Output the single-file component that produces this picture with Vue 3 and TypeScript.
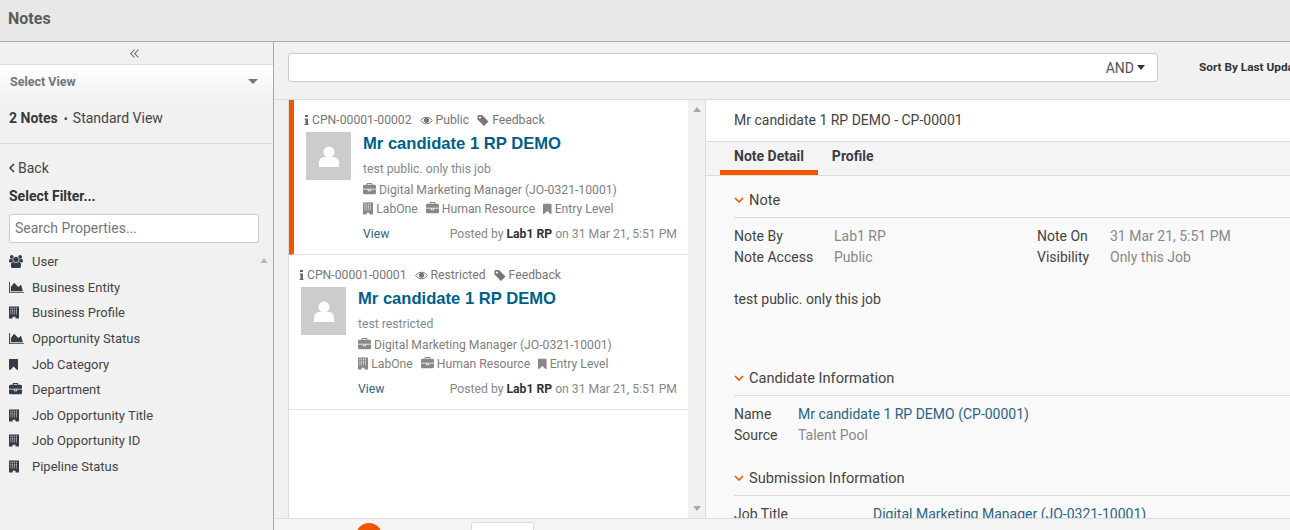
<script setup lang="ts">
// 筛选项图标类型
type IconName = "users" | "chart" | "building" | "bookmark" | "briefcase";

const filters: { label: string; icon: IconName }[] = [
  { label: "User", icon: "users" },
  { label: "Business Entity", icon: "chart" },
  { label: "Business Profile", icon: "building" },
  { label: "Opportunity Status", icon: "chart" },
  { label: "Job Category", icon: "bookmark" },
  { label: "Department", icon: "briefcase" },
  { label: "Job Opportunity Title", icon: "building" },
  { label: "Job Opportunity ID", icon: "building" },
  { label: "Pipeline Status", icon: "building" },
];

const notes = [
  { id: "CPN-00001-00002", access: "Public", body: "test public. only this job", active: true },
  { id: "CPN-00001-00001", access: "Restricted", body: "test restricted", active: false },
];

const paths: Record<IconName, { box: string; d: string }> = {
  users: {
    box: "0 0 1920 1792",
    d: "M593 896q-162 5-265 128h-134q-82 0-138-40.500t-56-118.500q0-353 124-353 6 0 43.500 21t97.500 42.500 119 21.500q67 0 133-23-5 37-5 66 0 139 81 256zm1071 637q0 120-73 189.500t-194 69.500h-874q-121 0-194-69.500t-73-189.500q0-53 3.500-103.500t14-109 26.500-108.500 43-97.500 62-81 85.500-53.500 111.500-20q10 0 43 21.500t73 48 107 48 135 21.500 135-21.500 107-48 73-48 43-21.500q61 0 111.500 20t85.500 53.500 62 81 43 97.500 26.500 108.500 14 109 3.500 103.500zm-1024-1277q0 106-75 181t-181 75-181-75-75-181 75-181 181-75 181 75 75 181zm704 384q0 159-112.500 271.500t-271.500 112.500-271.500-112.500-112.500-271.500 112.500-271.500 271.500-112.500 271.500 112.500 112.500 271.500zm576 225q0 78-56 118.500t-138 40.500h-134q-103-123-265-128 81-117 81-256 0-29-5-66 66 23 133 23 59 0 119-21.500t97.500-42.500 43.500-21q124 0 124 353zm-128-609q0 106-75 181t-181 75-181-75-75-181 75-181 181-75 181 75 75 181z",
  },
  chart: {
    box: "0 0 2048 1792",
    d: "M2048 1536v128h-2048v-1536h128v1408h1920zm-384-1024l256 896h-1664v-576l448-576 576 576z",
  },
  building: {
    box: "0 0 1408 1792",
    d: "M0 64h1408v1664h-512v-256h-384v256h-512zM192 256v128h128v-128zM448 256v128h128v-128zM704 256v128h128v-128zM960 256v128h128v-128zM192 512v128h128v-128zM448 512v128h128v-128zM704 512v128h128v-128zM960 512v128h128v-128zM192 768v128h128v-128zM448 768v128h128v-128zM704 768v128h128v-128zM960 768v128h128v-128zM192 1024v128h128v-128zM448 1024v128h128v-128zM704 1024v128h128v-128zM960 1024v128h128v-128z",
  },
  bookmark: {
    box: "0 0 1280 1792",
    d: "M1164 128q23 0 44 9 33 13 52.500 41t19.500 62v1289q0 34-19.500 62t-52.500 41q-19 8-44 8-48 0-83-32l-441-424-441 424q-36 33-83 33-23 0-44-9-33-13-52.500-41t-19.500-62v-1289q0-34 19.500-62t52.500-41q21-9 44-9h1048z",
  },
  briefcase: {
    box: "0 0 1792 1792",
    d: "M640 256h512v-128h-512v128zm1152 640v480q0 66-47 113t-113 47h-1472q-66 0-113-47t-47-113v-480h672v160q0 26 19 45t45 19h320q26 0 45-19t19-45v-160h672zm-768 0v128h-256v-128h256zm768-480v384h-1792v-384q0-66 47-113t113-47h352v-160q0-40 28-68t68-28h576q40 0 68 28t28 68v160h352q66 0 113 47t47 113z",
  },
};
</script>

<template>
  <div class="page">
    <header class="top">Notes</header>
    <div class="body">
      <aside class="side">
        <div class="collapse">
          <svg width="9" height="9" viewBox="0 0 9 9" fill="none" stroke="#666" stroke-width="1.100"><path d="M4.500 .5 .8 4.500l3.700 4M8.500 .5 4.800 4.500l3.700 4" /></svg>
        </div>
        <div class="view">
          <div class="view-select">
            <span>Select View</span>
            <i class="caret"></i>
          </div>
          <div class="view-count"><b>2 Notes</b><em>•</em>Standard View</div>
        </div>
        <div class="filter">
          <div class="back">
            <svg width="6" height="10" viewBox="0 0 6 10" fill="none" stroke="#333" stroke-width="1.500"><path d="M5 1 1 5l4 4" /></svg>
            Back
          </div>
          <div class="filter-title">Select Filter...</div>
          <input class="filter-input" placeholder="Search Properties..." />
          <ul class="filter-list">
            <li v-for="f in filters" :key="f.label">
              <span class="filter-icon">
                <svg height="13" :viewBox="paths[f.icon].box" fill="#333d47"><path fill-rule="evenodd" :d="paths[f.icon].d" /></svg>
              </span>
              {{ f.label }}
            </li>
            <i class="list-arrow"></i>
          </ul>
        </div>
      </aside>

      <main class="main">
        <div class="toolbar">
          <div class="search">
            <span class="and">AND</span><i class="caret dark"></i>
          </div>
          <b class="sort">Sort By Last Update</b>
        </div>
        <div class="content">
          <section class="list">
            <div class="cards">
              <article v-for="n in notes" :key="n.id" class="card" :class="{ active: n.active }">
                <div class="meta">
                  <span class="meta-item tight">
                    <svg width="5" height="10" viewBox="0 0 4 10" fill="#666"><path d="M.5 0h3v2h-3zM0 3.500h3.500V9H4v1H0V9h1V4.500H0z" /></svg>
                    {{ n.id }}
                  </span>
                  <span class="meta-item">
                    <svg width="13" height="9" viewBox="0 0 13 9" fill="none" stroke="#777"><path d="M.7 4.500C3.800.200 9.200.200 12.300 4.500 9.200 8.800 3.800 8.800.7 4.500z" /><circle cx="6.500" cy="4.300" r="2.200" fill="#777" /></svg>
                    {{ n.access }}
                  </span>
                  <span class="meta-item">
                    <svg width="12" height="11" viewBox="0 0 11 11" fill="#777"><path fill-rule="evenodd" d="M0 1a1 1 0 0 1 1-1h3.500L11 6.500 6.500 11 0 4.500zM2.500 1.600a1 1 0 1 0 .01 0z" /></svg>
                    Feedback
                  </span>
                </div>
                <div class="card-row">
                  <div class="avatar">
                    <svg width="20" height="21" viewBox="0 0 20 21" fill="#fff"><circle cx="10" cy="6" r="5.500" /><path d="M0 21v-4.500C0 12.500 3 11 5.500 11h9c2.500 0 5.500 1.500 5.500 5.500V21z" /></svg>
                  </div>
                  <div class="card-text">
                    <h3>Mr candidate 1 RP DEMO</h3>
                    <p class="note-body">{{ n.body }}</p>
                    <p class="line job">
                      <svg height="13" :viewBox="paths.briefcase.box" fill="#888"><path :d="paths.briefcase.d" /></svg>
                      Digital Marketing Manager (JO-0321-10001)
                    </p>
                    <p class="line">
                      <svg height="13" :viewBox="paths.building.box" fill="#888"><path fill-rule="evenodd" :d="paths.building.d" /></svg>
                      <span>LabOne</span>
                      <svg height="13" :viewBox="paths.briefcase.box" fill="#888"><path :d="paths.briefcase.d" /></svg>
                      <span>Human Resource</span>
                      <svg height="12" :viewBox="paths.bookmark.box" fill="#888"><path :d="paths.bookmark.d" /></svg>
                      <span>Entry Level</span>
                    </p>
                  </div>
                </div>
                <div class="card-foot">
                  <a>View</a>
                  <span>Posted by <b>Lab1 RP</b> on 31 Mar 21, 5:51 PM</span>
                </div>
              </article>
            </div>
            <div class="scroll">
              <i class="scroll-up"></i>
              <i class="scroll-down"></i>
            </div>
          </section>

          <section class="detail">
            <div class="detail-head">Mr candidate 1 RP DEMO - CP-00001</div>
            <nav class="tabs">
              <span class="tab on">Note Detail</span>
              <span class="tab">Profile</span>
            </nav>
            <div class="detail-body">
              <div class="sec-title">
                <svg width="10" height="6" viewBox="0 0 10 6" fill="none" stroke="#f25500" stroke-width="1.600"><path d="M1 1l4 4 4-4" /></svg>
                Note
              </div>
              <div class="note-grid">
                <span>Note By</span><span class="val">Lab1 RP</span>
                <span>Note On</span><span class="val">31 Mar 21, 5:51 PM</span>
                <span>Note Access</span><span class="val">Public</span>
                <span>Visibility</span><span class="val">Only this Job</span>
              </div>
              <p class="note-text">test public. only this job</p>

              <div class="sec-title">
                <svg width="10" height="6" viewBox="0 0 10 6" fill="none" stroke="#f25500" stroke-width="1.600"><path d="M1 1l4 4 4-4" /></svg>
                Candidate Information
              </div>
              <div class="cand-grid">
                <span>Name</span><a>Mr candidate 1 RP DEMO (CP-00001)</a>
                <span>Source</span><span class="val">Talent Pool</span>
              </div>

              <div class="sec-title">
                <svg width="10" height="6" viewBox="0 0 10 6" fill="none" stroke="#f25500" stroke-width="1.600"><path d="M1 1l4 4 4-4" /></svg>
                Submission Information
              </div>
              <div class="sub-grid">
                <span>Job Title</span><a>Digital Marketing Manager (JO-0321-10001)</a>
              </div>
            </div>
          </section>
        </div>
        <footer class="pager">
          <i class="pager-dot"></i>
          <i class="pager-box"></i>
        </footer>
      </main>
    </div>
  </div>
</template>

<style>
html,
body {
  margin: 0;
  overflow: hidden;
}
</style>

<style scoped>
.page {
  width: 1290px;
  height: 530px;
  overflow: hidden;
  display: flex;
  flex-direction: column;
  font-family: Roboto, "Liberation Sans", sans-serif;
  color: #333;
  background: #f1f1f1;
}

.top {
  height: 41px;
  flex: none;
  background: #e8e8e8;
  border-bottom: 1px solid #aaa;
  padding-left: 8px;
  font-size: 16px;
  font-weight: 700;
  line-height: 37px;
  color: #5c5c5c;
}

.body {
  flex: 1;
  display: flex;
  min-height: 0;
}

.side {
  width: 273px;
  flex: none;
  border-right: 1px solid #a8a8a8;
  background: #f1f1f1;
}

.collapse {
  height: 22px;
  display: flex;
  align-items: center;
  justify-content: center;
  padding-right: 4px;
  border-bottom: 1px solid #ddd;
}

.view {
  height: 78px;
  background: linear-gradient(#fff, #f1f1f1 36px);
  border-bottom: 1px solid #d9d9d9;
  padding: 0 10px;
}

.view-select {
  display: flex;
  justify-content: space-between;
  align-items: center;
  height: 32px;
  padding-right: 5px;
  font-size: 12.500px;
  font-weight: 700;
  color: #757575;
}

.caret {
  display: inline-block;
  border-top: 5px solid #777;
  border-left: 5px solid transparent;
  border-right: 5px solid transparent;
}

.caret.dark {
  border-top-color: #333;
  border-left-width: 4.500px;
  border-right-width: 4.500px;
  margin-left: 3px;
}

.view-count {
  margin: 12px 0 0 -1px;
  font-size: 14px;
  line-height: 18px;
  color: #444;
}

.view-count b {
  font-weight: 700;
  color: #3a3a3a;
}

.view-count em {
  font-style: normal;
  margin: 0 5px 0 6px;
  font-size: 12px;
}

.filter {
  padding: 15px 14px 0 9px;
  position: relative;
}

.back {
  display: flex;
  align-items: center;
  gap: 3px;
  font-size: 14px;
  line-height: 18px;
  color: #444;
}

.filter-title {
  margin-top: 10px;
  font-size: 14px;
  font-weight: 700;
  line-height: 18px;
  color: #333;
}

.filter-input {
  display: block;
  box-sizing: border-box;
  width: 250px;
  height: 29px;
  margin-top: 9px;
  padding: 0 5px 2px;
  border: 1px solid #ccc;
  border-radius: 2px;
  background: #fff;
  font-family: inherit;
  font-size: 14px;
  outline: none;
}

.filter-input::placeholder {
  color: #777;
  opacity: 1;
}

.filter-list {
  list-style: none;
  margin: 6px 0 0;
  padding: 0;
  position: relative;
  width: 250px;
}

.filter-list li {
  display: flex;
  align-items: center;
  height: 25.600px;
  font-size: 13px;
  color: #444;
}

.filter-icon {
  width: 23px;
  height: 13px;
  flex: none;
  display: flex;
}

.list-arrow {
  position: absolute;
  top: 9px;
  right: -9px;
  border-bottom: 5px solid #bbb;
  border-left: 4px solid transparent;
  border-right: 4px solid transparent;
}

.main {
  flex: 1;
  min-width: 0;
  display: flex;
  flex-direction: column;
}

.toolbar {
  height: 58px;
  flex: none;
  display: flex;
  box-sizing: border-box;
  padding: 11px 0 0 14px;
  border-bottom: 1px solid #ddd;
  white-space: nowrap;
}

.search {
  box-sizing: border-box;
  width: 870px;
  height: 29px;
  flex: none;
  display: flex;
  align-items: center;
  justify-content: flex-end;
  padding-right: 12px;
  background: #fff;
  border: 1px solid #ccc;
  border-radius: 3px;
}

.and {
  font-size: 14px;
  color: #555;
}

.sort {
  margin: 6px 0 0 41px;
  font-size: 11.800px;
  line-height: 16px;
  color: #333;
}

.content {
  flex: 1;
  min-height: 0;
  display: flex;
  padding-left: 14px;
}

.list {
  width: 417px;
  flex: none;
  display: flex;
  border-left: 1px solid #ddd;
  box-sizing: border-box;
  background: #fff;
}

.cards {
  flex: 1;
  min-width: 0;
}

.card {
  box-sizing: border-box;
  height: 155px;
  padding: 12px 11px 0 10px;
  border-bottom: 1px solid #e2e2e2;
}

.card.active {
  border-left: 5px solid #f25500;
}

.meta {
  display: flex;
  gap: 8px;
  font-size: 12.200px;
  line-height: 16px;
  color: #777;
}

.meta-item {
  display: flex;
  align-items: center;
  gap: 3px;
}

.card-row {
  display: flex;
  margin-top: 4px;
  padding-left: 2px;
}

.avatar {
  width: 45px;
  height: 48px;
  flex: none;
  background: #ccc;
  display: flex;
  align-items: center;
  justify-content: center;
}

.card-text {
  margin-left: 12px;
  padding-top: 1px;
  min-width: 0;
}

.card-text h3 {
  margin: 0;
  font-family: "Liberation Sans", Arial, sans-serif;
  font-size: 16.600px;
  font-weight: 700;
  line-height: 22px;
  color: #005f8a;
}

.card-text p {
  margin: 0;
  font-size: 12.200px;
  color: #808a94;
}

.note-body {
  margin-top: 5px !important;
  line-height: 19px;
}

.line {
  display: flex;
  align-items: center;
  gap: 3px;
  height: 19px;
  color: #808080 !important;
  white-space: nowrap;
}

.line.job {
  margin-top: 1px !important;
}

.line span + svg {
  margin-left: 5px;
}

.card-foot {
  display: flex;
  justify-content: space-between;
  margin-top: 8px;
  padding-left: 59px;
  font-size: 12.200px;
  line-height: 16px;
  color: #888;
}

.card-foot a {
  color: #2a6486;
}

.card-foot b {
  color: #333;
  font-weight: 700;
}

.scroll {
  width: 17px;
  flex: none;
  background: #f1f1f1;
  position: relative;
}

.scroll-up,
.scroll-down {
  position: absolute;
  left: 5px;
  border-left: 4px solid transparent;
  border-right: 4px solid transparent;
}

.scroll-up {
  top: 7px;
  border-bottom: 5px solid #a8a8a8;
}

.scroll-down {
  bottom: 7px;
  border-top: 5px solid #a8a8a8;
}

.detail {
  flex: 1;
  min-width: 0;
  display: flex;
  flex-direction: column;
  border-left: 1px solid #ddd;
  background: #f9f9f9;
  overflow: hidden;
}

.detail-head {
  height: 42px;
  flex: none;
  box-sizing: border-box;
  padding: 10px 0 0 28px;
  background: #fff;
  border-bottom: 1px solid #ddd;
  font-size: 14px;
  line-height: 20px;
  color: #444;
}

.tabs {
  height: 34px;
  flex: none;
  box-sizing: border-box;
  display: flex;
  padding-left: 14px;
  background: #f4f4f4;
  border-bottom: 1px solid #ddd;
}

.tab {
  padding: 6px 14px 0;
  height: 33px;
  box-sizing: border-box;
  font-size: 14px;
  font-weight: 700;
  line-height: 17px;
  color: #3c3c46;
}

.tab.on {
  border-bottom: 5px solid #f25500;
}

.detail-body {
  padding: 0 0 0 28px;
  font-size: 14px;
  color: #444;
}

.sec-title {
  display: flex;
  align-items: center;
  gap: 5px;
  height: 42px;
  box-sizing: border-box;
  padding-top: 7px;
  border-bottom: 1px solid #ddd;
  font-size: 14.600px;
  color: #444;
}

.note-grid {
  display: grid;
  grid-template-columns: 100px 203px 73px 1fr;
  grid-auto-rows: 21px;
  align-items: center;
  margin-top: 7px;
}

.val {
  color: #888;
}

.note-text {
  margin: 22px 0 0;
  height: 65px;
  line-height: 20px;
}

.cand-grid {
  display: grid;
  grid-template-columns: 64px 1fr;
  grid-auto-rows: 21px;
  align-items: center;
  margin-top: 7px;
  height: 51px;
}

.sub-grid {
  display: grid;
  grid-template-columns: 139px 1fr;
  margin-top: 8px;
  line-height: 21px;
}

.detail-body a {
  color: #2a6486;
}

.pager {
  height: 11px;
  flex: none;
  position: relative;
  border-top: 1px solid #ddd;
  background: #f4f4f4;
  overflow: hidden;
}

.pager-dot {
  position: absolute;
  left: 82px;
  top: 4px;
  width: 26px;
  height: 26px;
  border-radius: 50%;
  background: #f25500;
}

.pager-box {
  position: absolute;
  left: 197px;
  top: 3px;
  width: 63px;
  height: 30px;
  box-sizing: border-box;
  border: 1px solid #ddd;
  border-radius: 2px;
  background: #fff;
}
</style>
